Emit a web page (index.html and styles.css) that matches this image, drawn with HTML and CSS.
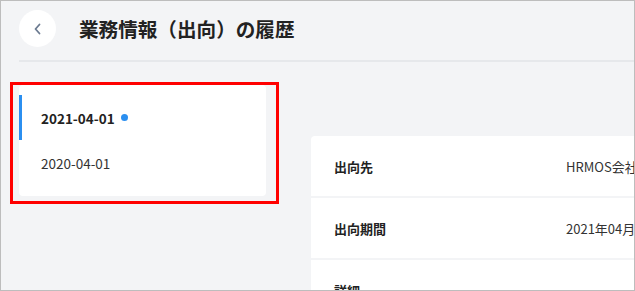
FILE: index.html
```html
<!DOCTYPE html>
<html lang="ja">
<head>
    <meta charset="UTF-8">
    <title>業務情報（出向）の履歴</title>
    <link rel="stylesheet" href="styles.css">
</head>
<body>

<div class="frame">
    <header class="page-head">
        <button class="back-btn" type="button" aria-label="戻る">
            <svg width="10" height="12" viewBox="0 0 10 12">
                <path d="M6.5 1.5 L2.5 6 L6.5 10.5" fill="none" stroke="#6b7a90" stroke-width="1.8" stroke-linecap="round" stroke-linejoin="round"/>
            </svg>
        </button>
        <h1>業務情報（出向）の履歴</h1>
    </header>

    <div class="content">
        <aside class="history">
            <ul class="history-list">
                <li class="history-item active">2021-04-01 <span class="dot"></span></li>
                <li class="history-item">2020-04-01</li>
            </ul>
            <div class="highlight"></div>
        </aside>

        <section class="detail">
            <div class="detail-row">
                <div class="detail-label">出向先</div>
                <div class="detail-value">HRMOS会社</div>
            </div>
            <div class="detail-row">
                <div class="detail-label">出向期間</div>
                <div class="detail-value">2021年04月01日 〜</div>
            </div>
            <div class="detail-row">
                <div class="detail-label">詳細</div>
                <div class="detail-value"></div>
            </div>
        </section>
    </div>
</div>

</body>
</html>
```

FILE: styles.css
```css
html, body {
    margin: 0;
    padding: 0;
}

body {
    font-family: "Noto Sans CJK JP", "Noto Sans", sans-serif;
    color: #222;
}

.frame {
    box-sizing: border-box;
    width: 635px;
    height: 291px;
    overflow: hidden;
    background-color: #f3f4f6;
    border: 1px solid #bdbdbd;
}

.page-head {
    display: flex;
    align-items: center;
    gap: 23px;
    margin: 0 0 0 18px;
    padding: 9px 0 13px;
    border-bottom: 2px solid #e6e8eb;
}

.back-btn {
    width: 37px;
    height: 37px;
    border: none;
    border-radius: 50%;
    background: white;
    padding: 0;
    display: flex;
    align-items: center;
    justify-content: center;
}

.page-head h1 {
    margin: 0;
    font-size: 19.6px;
    font-weight: bold;
    color: #222;
}

.content {
    display: flex;
    align-items: flex-start;
    gap: 45px;
    padding: 23px 0 0 18px;
}

.history {
    position: relative;
    flex: 0 0 247px;
}

.history-list {
    list-style: none;
    margin: 0;
    padding: 10px 0 11px;
    background: white;
    border-radius: 4px;
}

.history-item {
    display: flex;
    align-items: center;
    gap: 6px;
    height: 45px;
    padding-left: 22px;
    font-size: 13.5px;
    color: #333;
}

.history-item.active {
    font-weight: bold;
    color: #222;
    box-shadow: inset 3px 0 0 #2b8ff0;
}

.dot {
    width: 7px;
    height: 7px;
    border-radius: 50%;
    background: #2b8ff0;
}

.highlight {
    position: absolute;
    left: -9px;
    top: -3px;
    width: 263px;
    height: 116px;
    border: 3px solid #ff0000;
}

.detail {
    flex: 0 0 400px;
    margin-top: 51px;
    display: flex;
    flex-direction: column;
    gap: 2px;
    border-radius: 4px;
    overflow: hidden;
}

.detail-row {
    display: flex;
    align-items: center;
    height: 60px;
    background: white;
}

.detail-label {
    width: 232px;
    padding-left: 23px;
    font-size: 13px;
    font-weight: bold;
    color: #222;
}

.detail-value {
    font-size: 13px;
    color: #333;
}
```
